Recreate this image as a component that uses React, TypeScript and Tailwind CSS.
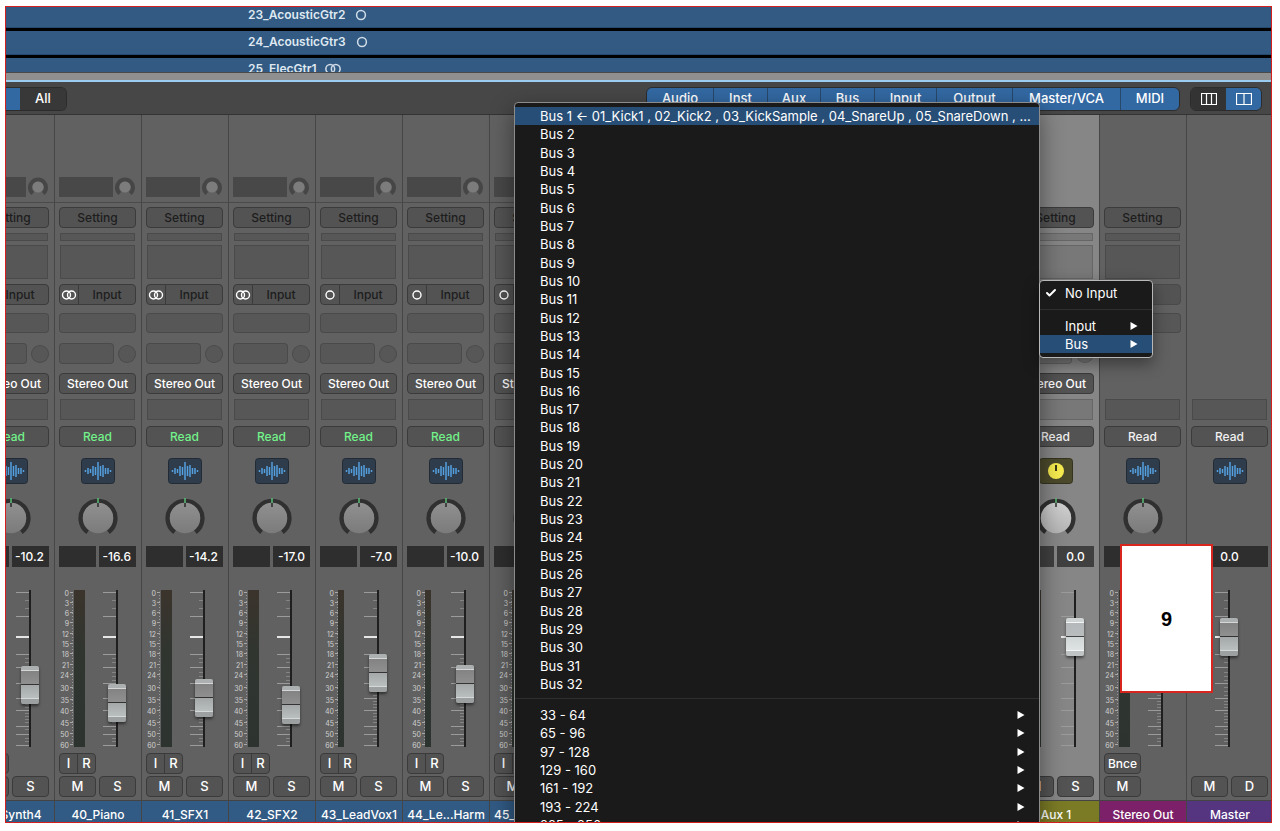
import { clsx } from "clsx";
import { Check } from "lucide-react";

type Kind = "track" | "aux" | "output" | "master";

interface Channel {
  name: string;
  kind: Kind;
  stereo: boolean;
  level: string;
  fader: number;
}

const CHANNELS: Channel[] = [
  { name: "39_Synth4", kind: "track", stereo: true, level: "-10.2", fader: 43 },
  { name: "40_Piano", kind: "track", stereo: true, level: "-16.6", fader: 25 },
  { name: "41_SFX1", kind: "track", stereo: true, level: "-14.2", fader: 30 },
  { name: "42_SFX2", kind: "track", stereo: true, level: "-17.0", fader: 23 },
  { name: "43_LeadVox1", kind: "track", stereo: false, level: "-7.0", fader: 55 },
  { name: "44_Le...Harm", kind: "track", stereo: false, level: "-10.0", fader: 44 },
  { name: "45_", kind: "track", stereo: false, level: "", fader: 44 },
];

const OUTPUTS: Channel[] = [
  { name: "Aux 1", kind: "aux", stereo: false, level: "0.0", fader: 91 },
  { name: "Stereo Out", kind: "output", stereo: true, level: "", fader: 91 },
  { name: "Master", kind: "master", stereo: false, level: "0.0", fader: 91 },
];

const NAME_COLORS: Record<Kind, string> = {
  track: "bg-[#315a84]",
  aux: "bg-[#7b7b26]",
  output: "bg-[#7b2069]",
  master: "bg-[#553480]",
};

const FILTERS = [
  { label: "Audio", width: "w-[67px]" },
  { label: "Inst", width: "w-[54px]" },
  { label: "Aux", width: "w-[53px]" },
  { label: "Bus", width: "w-[54px]" },
  { label: "Input", width: "w-[62px]" },
  { label: "Output", width: "w-[76px]" },
  { label: "Master/VCA", width: "w-[108px]" },
  { label: "MIDI", width: "w-[58px]" },
];

const BUSES = Array.from({ length: 32 }, (_, i) => `Bus ${i + 1}`);
const BUS_GROUPS = [
  "33 - 64",
  "65 - 96",
  "97 - 128",
  "129 - 160",
  "161 - 192",
  "193 - 224",
  "225 - 256",
];

// label, y
const METER_SCALE: [string, number][] = [
  ["0", 3], ["3", 13], ["6", 23], ["9", 33], ["12", 44], ["15", 54], ["18", 64], ["21", 75],
  ["24", 85], ["30", 98], ["35", 110], ["40", 121], ["45", 133], ["50", 144], ["60", 155],
];

const FADER_MAJOR = [2, 26, 64, 77, 93, 108, 120, 136, 144, 155];
const FADER_MINOR = [10, 18, 68, 72, 82, 86, 90, 97, 101, 105, 111, 114, 117, 123, 126, 129, 132, 139, 148, 151];

// half heights of the waveform bars
const WAVE = [1, 3, 2, 5, 4, 9, 5, 6, 3, 3, 1];

const BUTTON =
  "flex shrink-0 items-center justify-center rounded border border-[#3b3b3b] bg-[#535353] font-medium";

function LinkedCircles({ stereo, className }: { stereo: boolean; className?: string }) {
  return (
    <svg
      viewBox="0 0 16 12"
      className={clsx("h-3 w-4 shrink-0", className)}
      fill="none"
      stroke="currentColor"
      strokeWidth="1.4"
    >
      {stereo ? (
        <>
          <circle cx="5.5" cy="6" r="4" />
          <circle cx="10.5" cy="6" r="4" />
        </>
      ) : (
        <circle cx="8" cy="6" r="4" />
      )}
    </svg>
  );
}

function TrackRow({ name, stereo }: { name: string; stereo?: boolean }) {
  return (
    <div className="mb-[3px] flex h-6 items-start gap-2 border-b border-[#244a70] bg-[#325a82] pl-[242px]">
      <span className="text-xs font-semibold leading-[22px] text-[#dfe8f1]">{name}</span>
      <LinkedCircles stereo={!!stereo} className="mt-[5px] scale-110 text-[#cfdbe7]" />
    </div>
  );
}

function EmptySlot({ className }: { className: string }) {
  return <div className={clsx("shrink-0 border border-black/15 bg-black/10", className)} />;
}

function GainDial() {
  return (
    <svg viewBox="0 0 20 20" className="h-5 w-5" fill="none">
      <path d="M4.8 16.6A8 8 0 1 1 15.2 16.6" stroke="#464646" strokeWidth="4" />
      <circle cx="10" cy="10" r="5.5" fill="#7c7c7c" />
    </svg>
  );
}

function PanKnob({ bright }: { bright: boolean }) {
  return (
    <svg viewBox="0 0 40 40" className="h-10 w-10" fill="none">
      <defs>
        <linearGradient id={bright ? "knob-bright" : "knob"} x1="0" y1="0" x2="0" y2="1">
          <stop offset="0" stopColor={bright ? "#d0d0d0" : "#909090"} />
          <stop offset="1" stopColor={bright ? "#b4b4b4" : "#7b7b7b"} />
        </linearGradient>
      </defs>
      <path d="M9.6 34.2A17.4 17.4 0 1 1 30.4 34.2" stroke="#303030" strokeWidth="4.4" />
      <circle cx="20" cy="20" r="15.2" fill={bright ? "url(#knob-bright)" : "url(#knob)"} />
      <path d="M20 0v5" stroke="#5fc97a" strokeWidth="1.4" />
      <path d="M20 5v4" stroke="#222" strokeWidth="1.4" />
    </svg>
  );
}

function ChannelIcon({ kind }: { kind: Kind }) {
  if (kind === "aux") {
    return (
      <svg viewBox="0 0 34 26" className="h-[26px] w-[34px]">
        <rect x="0.5" y="0.5" width="33" height="25" rx="3" fill="#4c4a2c" stroke="#34331f" />
        <circle cx="17" cy="13" r="8" fill="#f7ec4f" />
        <path d="M17 7v6" stroke="#3b3918" strokeWidth="2" />
      </svg>
    );
  }
  return (
    <svg viewBox="0 0 34 26" className="h-[26px] w-[34px]">
      <rect x="0.5" y="0.5" width="33" height="25" rx="3" fill="#2e3c4b" stroke="#222b35" />
      {WAVE.map((h, i) => (
        <path key={i} d={`M${4.5 + i * 2.5} ${13 - h}v${h * 2}`} stroke="#559fde" strokeWidth="1.5" />
      ))}
    </svg>
  );
}

function Meter({ stereo }: { stereo: boolean }) {
  const x = stereo ? 10 : 14;
  return (
    <svg viewBox="0 0 28 157" className="h-[157px] w-7 shrink-0 overflow-visible">
      <defs>
        <linearGradient id="meter" x1="0" y1="0" x2="0" y2="1">
          <stop offset="0" stopColor="#3b342c" />
          <stop offset="0.4" stopColor="#303530" />
          <stop offset="1" stopColor="#2d342f" />
        </linearGradient>
      </defs>
      <rect x={stereo ? 15 : 18} y="0" width={stereo ? 11 : 6} height="157" fill="url(#meter)" />
      <path d={`M${x + 3.5} 2V155`} stroke="#9a9a9a" strokeDasharray="1 2" />
      {METER_SCALE.map(([label, y]) => (
        <g key={label}>
          <text x={x} y={y + 3} textAnchor="end" fontSize="7" fill="#d0d0d0">
            {label}
          </text>
          <path d={`M${x + 1} ${y - 0.5}h3`} stroke="#a8a8a8" />
        </g>
      ))}
    </svg>
  );
}

function Fader({ channel }: { channel: Channel }) {
  return (
    <div className="grid h-[157px] w-6 shrink-0">
      <svg viewBox="0 0 24 157" className="h-[157px] w-6 [grid-area:1/1]" fill="none">
        {FADER_MAJOR.map((y) => (
          <path key={y} d={`M1 ${y + 0.5}h13`} stroke="#9b9b9b" />
        ))}
        {FADER_MINOR.map((y) => (
          <path key={y} d={`M10 ${y + 0.5}h4`} stroke="#848484" />
        ))}
        <path d="M1 47h13" stroke="#e6e6e6" strokeWidth="2" />
        <path d="M15 0v157" stroke="#1f1f1f" strokeWidth="2" />
      </svg>
      <input
        type="range"
        aria-label={`${channel.name} volume`}
        min={0}
        max={119}
        defaultValue={channel.fader}
        className={clsx(
          "h-[157px] w-[18px] appearance-none justify-self-end bg-transparent [direction:rtl] [grid-area:1/1] [writing-mode:vertical-lr]",
          "[&::-webkit-slider-thumb]:h-[38px] [&::-webkit-slider-thumb]:w-[18px] [&::-webkit-slider-thumb]:appearance-none [&::-webkit-slider-thumb]:rounded-[2px] [&::-webkit-slider-thumb]:shadow-[0_2px_3px_rgba(0,0,0,0.5)]",
          channel.kind === "aux"
            ? "[&::-webkit-slider-thumb]:bg-[linear-gradient(#d0d4d5_0_4px,#f4f6f6_4px_5px,#b4b8ba_5px,#b9bdbe_18px,#444_18px_19px,#d0d5d6_19px,#dfe3e4_32px,#f4f6f6_32px_33px,#c0c4c5_33px)]"
            : "[&::-webkit-slider-thumb]:bg-[linear-gradient(#adb0b1_0_4px,#d4d6d7_4px_5px,#838383_5px,#909090_18px,#333_18px_19px,#a4a8a9_19px,#b9bebf_32px,#d4d8d8_32px_33px,#9da0a1_33px)]",
        )}
      />
    </div>
  );
}

function ChannelStrip({ channel }: { channel: Channel }) {
  const { kind, stereo, name } = channel;
  const isTrack = kind === "track";
  const isMaster = kind === "master";
  const hasRouting = isTrack || kind === "aux";

  return (
    <section
      aria-label={name}
      className={clsx(
        "flex w-[87px] shrink-0 flex-col border-r border-[#464646]",
        kind === "aux" ? "bg-[#868686]" : "bg-[#616161]",
      )}
    >
      <div
        className={clsx(
          "flex h-[88px] items-end gap-[2px] pb-[5px] pl-1",
          isTrack && "border-b border-[#4a4a4a]",
        )}
      >
        {isTrack && (
          <>
            <div className="h-5 w-[54px] bg-[#484848]" />
            <GainDial />
          </>
        )}
      </div>

      <div className="flex h-[597px] flex-col pl-1 pr-[5px] pt-1">
        <div className="h-[216px] shrink-0">
          {!isMaster && (
            <div className="flex flex-col">
              <button className={clsx(BUTTON, "h-[21px] text-xs text-[#1d1d1d]")}>Setting</button>
              <EmptySlot className="mx-px mt-[5px] h-2" />
              <EmptySlot className="mx-px mt-1 h-[34px]" />
              <div
                className={clsx(
                  "mt-[5px] flex h-[21px] overflow-hidden rounded border bg-[#535353]",
                  kind === "output" ? "border-[#4a4a4a]" : "border-[#3b3b3b]",
                )}
              >
                {hasRouting && (
                  <>
                    <button
                      aria-label="Format"
                      className="flex w-[19px] items-center justify-center border-r border-[#3b3b3b] text-white"
                    >
                      <LinkedCircles stereo={stereo} />
                    </button>
                    <button className="flex-1 text-xs font-medium text-[#1d1d1d]">Input</button>
                  </>
                )}
              </div>
              <EmptySlot className="mt-2 h-5 rounded" />
              {hasRouting && (
                <>
                  <div className="mt-[10px] flex items-center justify-between">
                    <EmptySlot className="h-[21px] w-[55px] rounded" />
                    <EmptySlot className="h-[18px] w-[18px] rounded-full" />
                  </div>
                  <button className={clsx(BUTTON, "mt-[9px] h-[21px] whitespace-nowrap text-xs text-white")}>
                    Stereo Out
                  </button>
                </>
              )}
            </div>
          )}
        </div>

        <EmptySlot className="mx-px -mt-6 h-[21px]" />
        <button
          className={clsx(
            BUTTON,
            "mt-[6px] h-[21px] text-xs",
            isTrack ? "text-[#72f28a]" : "text-[#f0f0f0]",
          )}
        >
          Read
        </button>
        <div className="mt-[11px] flex justify-center">
          <ChannelIcon kind={kind} />
        </div>
        <div className="mt-[14px] flex h-10 justify-center">
          {!isMaster && <PanKnob bright={kind === "aux"} />}
        </div>

        <div className="mt-2 flex h-[21px] gap-[3px] text-xs font-medium leading-[21px] text-white">
          {!isMaster && <div className={clsx("w-[37px]", kind === "aux" ? "bg-[#404040]" : "bg-[#2e2e2e]")} />}
          <div
            className={clsx(
              "flex-1",
              kind === "aux" ? "bg-[#404040]" : "bg-[#2e2e2e]",
              isMaster || kind === "aux" ? "text-center" : "pr-[5px] text-right",
            )}
          >
            {channel.level}
          </div>
        </div>

        <div className={clsx("mt-[23px] flex shrink-0", isMaster ? "pl-[23px]" : "gap-[15px]")}>
          {!isMaster && <Meter stereo={stereo} />}
          <Fader channel={channel} />
        </div>

        <div className="mt-[6px] flex h-[21px] shrink-0 text-[13px]">
          {isTrack && (
            <div className="flex w-[37px] rounded border border-[#3b3b3b] bg-[#535353] font-medium text-white">
              <button className="flex-1 border-r border-[#3b3b3b]">I</button>
              <button className="flex-1">R</button>
            </div>
          )}
          {kind === "output" && <button className={clsx(BUTTON, "w-[37px] text-xs text-white")}>Bnce</button>}
        </div>
        <div className="mt-[2px] flex h-[21px] shrink-0 gap-[3px] text-[13px]">
          <button className={clsx(BUTTON, "w-[37px] text-white")}>M</button>
          {kind !== "output" && (
            <button className={clsx(BUTTON, "w-[37px] text-white")}>{isMaster ? "D" : "S"}</button>
          )}
        </div>
      </div>

      <div
        className={clsx(
          "h-[22px] overflow-hidden whitespace-nowrap border-t border-[#444] px-1 pt-[6px] text-xs font-medium text-white",
          name.length > 3 ? "text-center" : "text-left",
          NAME_COLORS[kind],
        )}
      >
        {name}
      </div>
    </section>
  );
}

function Arrow() {
  return (
    <svg viewBox="0 0 8 8" className="h-2 w-2" fill="white">
      <path d="M0.5 0L7.5 4L0.5 8Z" />
    </svg>
  );
}

function MenuItem({
  label,
  active,
  checked,
  submenu,
}: {
  label: string;
  active?: boolean;
  checked?: boolean;
  submenu?: boolean;
}) {
  return (
    <li className={clsx("grid min-h-0", active && "bg-[#274e76]")}>
      <button
        className={clsx(
          "flex min-h-0 items-center pl-[5px] text-left text-white",
          submenu ? "pr-[14px]" : "pr-1",
        )}
      >
        <span className="w-5 shrink-0">{checked && <Check size={12} strokeWidth={4} />}</span>
        <span className="flex-1 whitespace-nowrap leading-[18px]">{label}</span>
        {submenu && <Arrow />}
      </button>
    </li>
  );
}

function BusMenu() {
  return (
    <div className="absolute right-[231px] top-[95px] w-[526px] rounded-t border border-[#8c8c8c] bg-[#1a1a1a] pt-1 text-[13px] shadow-[0_8px_24px_rgba(0,0,0,0.45)]">
      <ul className="grid h-[586px] auto-rows-fr">
        {BUSES.map((bus, i) => (
          <MenuItem
            key={bus}
            label={
              i === 0
                ? `${bus} ← 01_Kick1 , 02_Kick2 , 03_KickSample , 04_SnareUp , 05_SnareDown , ...`
                : bus
            }
            active={i === 0}
          />
        ))}
      </ul>
      <hr className="mb-[7px] mt-[5px] border-[#2e2e2e]" />
      <ul className="grid h-32 auto-rows-fr">
        {BUS_GROUPS.map((group) => (
          <MenuItem key={group} label={group} submenu />
        ))}
      </ul>
    </div>
  );
}

function InputMenu() {
  return (
    <div className="absolute right-[118px] top-[273px] w-[114px] rounded border border-[#b8b8b8] bg-[#1a1a1a] pb-1 pt-[3px] text-[13px] shadow-[0_6px_16px_rgba(0,0,0,0.4)]">
      <ul>
        <MenuItem label="No Input" checked />
      </ul>
      <hr className="my-[7px] border-[#2e2e2e]" />
      <ul>
        <MenuItem label="Input" submenu />
        <MenuItem label="Bus" submenu active />
      </ul>
    </div>
  );
}

function Toolbar() {
  return (
    <div className="flex h-[33px] items-center justify-between border-b border-[#333] bg-[#474747] pr-[9px] pt-[2px] text-[13px] font-medium text-white">
      <div className="flex h-6 overflow-hidden rounded-r-md border border-l-0 border-[#2c2c2c]">
        <button aria-label="Tracks" className="w-[14px] bg-[#3369a3]" />
        <button className="w-[46px] bg-[#383838]">All</button>
      </div>
      <div className="flex gap-[10px]">
        <div className="flex h-6 overflow-hidden rounded-md border border-[#2c2c2c] bg-[#3369a3]">
          {FILTERS.map(({ label, width }) => (
            <button key={label} className={clsx(width, "border-r border-[#28486b] last:border-r-0")}>
              {label}
            </button>
          ))}
        </div>
        <div className="flex h-6 overflow-hidden rounded-md border border-[#2c2c2c]">
          <button aria-label="Narrow strips" className="flex w-[35px] items-center justify-center bg-[#333]">
            <svg viewBox="0 0 16 14" className="h-[14px] w-4" fill="none" stroke="currentColor">
              <path d="M0.5 1.5h15v11h-15zM5.5 1.5v11M10.5 1.5v11" strokeWidth="1.2" />
            </svg>
          </button>
          <button aria-label="Wide strips" className="flex w-[35px] items-center justify-center bg-[#3369a3]">
            <svg viewBox="0 0 16 14" className="h-[14px] w-4" fill="none" stroke="currentColor">
              <path d="M0.5 1.5h15v11h-15zM8 1.5v11" strokeWidth="1.2" />
            </svg>
          </button>
        </div>
      </div>
    </div>
  );
}

export default function App() {
  return (
    <div className="bg-white pl-[5px] pr-2 pt-[6px] font-['Inter',sans-serif]">
      <main className="relative overflow-hidden border border-[#d3201f] bg-[#474747]">
        <div className="flex h-[65px] flex-col justify-start overflow-hidden bg-black">
          <div className="-mt-[3px]">
            <TrackRow name="23_AcousticGtr2" />
            <TrackRow name="24_AcousticGtr3" />
            <TrackRow name="25_ElecGtr1" stereo />
          </div>
        </div>
        <div className="h-[10px] border-b-2 border-t border-b-[#9bcdf2] border-t-[#4a4a4a] bg-[#8f8f8f]" />
        <Toolbar />

        <div className="-mr-[3px] flex justify-end">
          {CHANNELS.map((channel) => (
            <ChannelStrip key={channel.name} channel={channel} />
          ))}
          <div className="w-[436px] shrink-0 bg-[#616161]" />
          {OUTPUTS.map((channel) => (
            <ChannelStrip key={channel.name} channel={channel} />
          ))}
        </div>

        <BusMenu />
        <InputMenu />
        <div className="absolute right-[58px] top-[537px] flex h-[149px] w-[93px] items-center justify-center border-2 border-[#d8261f] bg-white font-['Liberation_Sans',sans-serif] text-xl font-bold text-black">
          9
        </div>
      </main>
    </div>
  );
}
